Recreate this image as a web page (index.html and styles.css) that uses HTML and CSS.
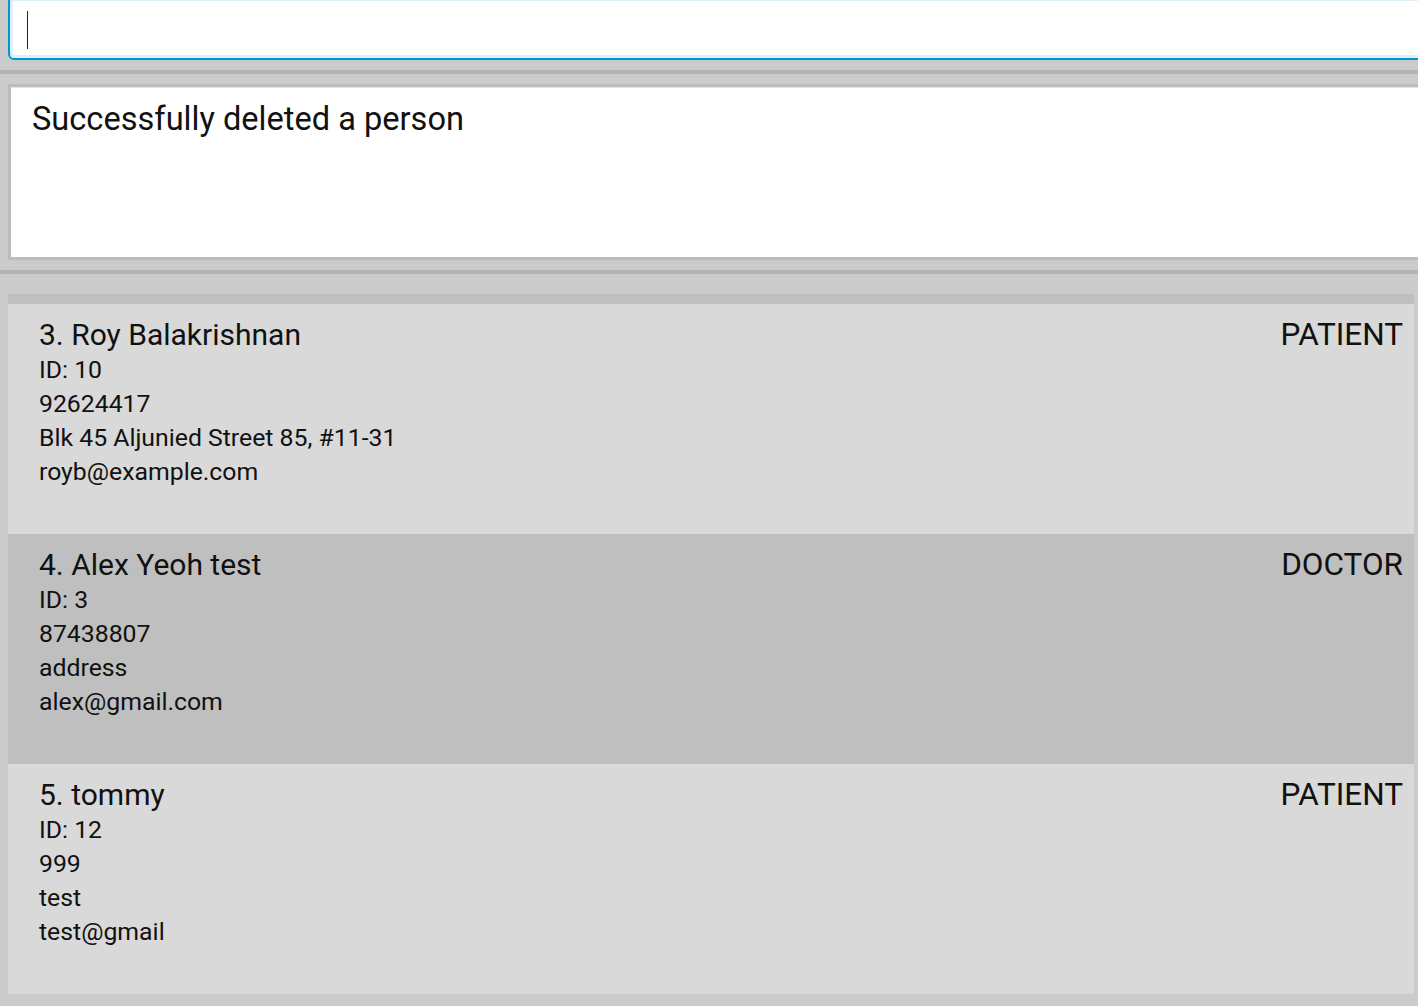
FILE: index.html
```html
<!DOCTYPE html>
<html>
<head>
<meta charset="utf-8">
<link rel="stylesheet" href="styles.css">
</head>
<body>
<div class="app">
  <div class="command">
    <div class="command-input"><span class="caret"></span></div>
  </div>
  <div class="divider"></div>
  <div class="result">
    <div class="result-box">Successfully deleted a person</div>
  </div>
  <div class="divider"></div>
  <div class="list">
    <div class="list-top"></div>
    <div class="card">
      <div class="card-main">
        <div class="name">3. Roy Balakrishnan</div>
        <div class="line">ID: 10</div>
        <div class="line">92624417</div>
        <div class="line">Blk 45 Aljunied Street 85, #11-31</div>
        <div class="line">royb@example.com</div>
      </div>
      <div class="tag">PATIENT</div>
    </div>
    <div class="card card-alt">
      <div class="card-main">
        <div class="name">4. Alex Yeoh test</div>
        <div class="line">ID: 3</div>
        <div class="line">87438807</div>
        <div class="line">address</div>
        <div class="line">alex@gmail.com</div>
      </div>
      <div class="tag">DOCTOR</div>
    </div>
    <div class="card">
      <div class="card-main">
        <div class="name">5. tommy</div>
        <div class="line">ID: 12</div>
        <div class="line">999</div>
        <div class="line">test</div>
        <div class="line">test@gmail</div>
      </div>
      <div class="tag">PATIENT</div>
    </div>
  </div>
</div>
</body>
</html>
```

FILE: styles.css
```css
html, body {
  margin: 0;
  padding: 0;
  background: #cbcbcb;
  overflow: hidden;
  height: 1006px;
}
body {
  font-family: Roboto, "Liberation Sans", sans-serif;
  color: #111;
}
.app {
  display: flex;
  flex-direction: column;
}
.command {
  height: 60px;
  padding-left: 8px;
}
.command-input {
  margin-top: -4px;
  height: 64px;
  width: calc(100% + 40px);
  box-sizing: border-box;
  background: #fff;
  border: 2px solid #0097cf;
  border-radius: 6px;
  box-shadow: inset 0 0 0 3px #dff0f8;
  display: flex;
  align-items: center;
  padding-left: 17px;
}
.caret {
  display: block;
  width: 1px;
  height: 38px;
  margin-top: 4px;
  background: #222;
}
.divider {
  margin-top: 10px;
  height: 4px;
  background: #b3b3b3;
}
.result {
  padding: 10px 0 0 8px;
}
.result-box {
  height: 176px;
  width: calc(100% + 40px);
  box-sizing: border-box;
  background: #fff;
  border: 3px solid #bcbcbc;
  box-shadow: inset 0 1px 0 #e6e6e6;
  padding: 12px 21px;
  font-size: 32.6px;
  line-height: 40px;
}
.list {
  margin: 20px 4px 0 8px;
  display: flex;
  flex-direction: column;
}
.list-top {
  height: 10px;
  background: #bfbfbf;
}
.card {
  height: 230px;
  box-sizing: border-box;
  background: #d9d9d9;
  display: flex;
  justify-content: space-between;
  padding: 13px 11px 0 31px;
}
.card-alt {
  background: #bfbfbf;
}
.name {
  font-size: 30px;
  line-height: 36px;
}
.line {
  font-size: 24.8px;
  line-height: 34px;
}
.tag {
  font-size: 31.5px;
  line-height: 36px;
}
```
